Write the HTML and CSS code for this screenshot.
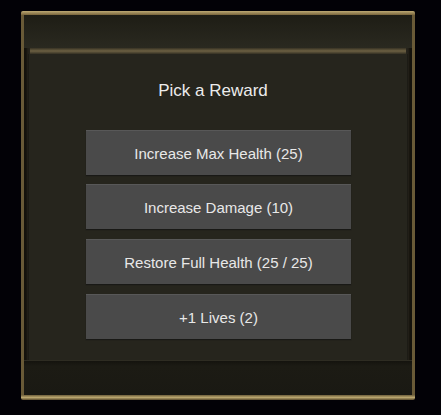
FILE: index.html
```html
<!DOCTYPE html>
<html lang="en">

    <head>
        <meta charset="UTF-8">
        <meta name="viewport" content="width=device-width, initial-scale=1.0">
        <title>Pick a Reward</title>
        <link rel="stylesheet" href="styles.css">
    </head>

    <body>
        <div id="frame">
            <div class="cap-top"></div>
            <div id="panel">
                <div class="header"></div>
                <div class="ridge"></div>
                <div class="content">
                    <h1>Pick a Reward</h1>
                    <div class="choices">
                        <button class="btn-reward">Increase Max Health (25)</button>
                        <button class="btn-reward">Increase Damage (10)</button>
                        <button class="btn-reward">Restore Full Health (25 / 25)</button>
                        <button class="btn-reward">+1 Lives (2)</button>
                    </div>
                </div>
                <div class="footer"></div>
            </div>
            <div class="cap-bottom"></div>
        </div>
    </body>

</html>
```

FILE: styles.css
```css
*{
    margin:0;
    padding: 0;
    box-sizing: border-box;
    font-family: "Liberation Sans", Arial, sans-serif;
}
body{
    background-color: rgb(2,1,6);
    width:441px;
    height:415px;
    overflow: hidden;
}
#frame{
    width:394px;
    margin-left:21px;
    margin-top:11px;
    display: flex;
    flex-direction: column;
}
.cap-top{
    height:4px;
    background: linear-gradient(to bottom, rgb(190,170,115), rgb(120,100,60));
    border-radius: 2px 2px 0 0;
}
.cap-bottom{
    height:5px;
    background: linear-gradient(to bottom, rgb(110,95,60), rgb(185,165,110) 50%, rgb(90,75,45));
    border-radius: 0 0 2px 2px;
}
#panel{
    border-left:3px solid rgb(105,90,55);
    border-right:3px solid rgb(105,90,55);
    background-color: rgb(38,36,28);
    display: flex;
    flex-direction: column;
    box-shadow: inset 3px 0 2px rgb(20,18,12), inset -3px 0 2px rgb(20,18,12);
}
.header{
    height:33px;
    background: linear-gradient(to bottom, rgb(30,29,21), rgb(42,41,32));
}
.ridge{
    height:6px;
    margin: 0 6px;
    background: linear-gradient(to bottom, rgb(55,50,36), rgb(108,96,66) 50%, rgb(52,48,35));
}
.content{
    height:306px;
    padding-top:27px;
    display: flex;
    flex-direction: column;
    align-items: center;
    background-color: rgb(38,37,29);
    border-left:1px solid rgb(28,27,21);
    border-right:1px solid rgb(28,27,21);
    margin: 0 4px;
}
.content>h1{
    color: rgb(236,236,236);
    font-weight: normal;
    font-size: 17px;
    line-height: 20px;
    margin-left:-10px;
    margin-bottom: 29px;
}
.choices{
    width:265px;
    margin-left:1px;
    display: flex;
    flex-direction: column;
    gap:9px;
}
.btn-reward{
    height:45px;
    border: none;
    border-top:1px solid rgb(88,88,88);
    background-color: rgb(74,74,74);
    color: rgb(232,232,232);
    font-size: 15px;
    box-shadow: 0 1px 1px rgb(25,25,22);
}
.btn-reward:nth-child(n+3){
    margin-top:1px;
}
.footer{
    height:35px;
    background: linear-gradient(to bottom, rgb(20,19,14), rgb(28,27,20) 15%, rgb(26,25,19));
    border-top:1px solid rgb(46,44,34);
}
```
